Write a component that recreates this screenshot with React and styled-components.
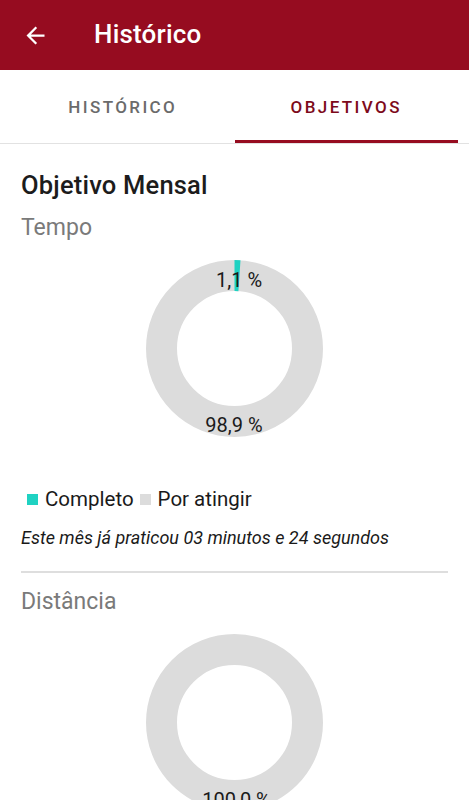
import React from 'react';
import styled, { createGlobalStyle } from 'styled-components';

const Global = createGlobalStyle`
  body {
    margin: 0;
    background: #fff;
    font-family: Roboto, "Noto Sans", sans-serif;
  }
`;

const Page = styled.div`
  width: 469px;
  height: 800px;
  overflow: hidden;
  background: #fff;
`;

const TopBar = styled.header`
  height: 70px;
  background: #960c20;
  display: flex;
  align-items: center;
  padding-left: 22px;
  gap: 45px;
  color: #fff;
`;

const Title = styled.h1`
  margin: 0 0 2px 0;
  font-size: 26px;
  font-weight: 500;
  letter-spacing: 0.2px;
`;

const Tabs = styled.nav`
  height: 73px;
  display: grid;
  grid-template-columns: 1fr 1fr;
  border-bottom: 1px solid #e2e2e2;
  padding: 0 11px 0 11px;
`;

const Tab = styled.div`
  display: flex;
  align-items: center;
  justify-content: center;
  font-size: 17px;
  font-weight: 500;
  letter-spacing: 2.4px;
  color: ${p => (p.active ? '#7d0a1b' : '#6b6b6b')};
  border-bottom: 3px solid ${p => (p.active ? '#960c20' : 'transparent')};
  padding-top: 3px;
`;

const Content = styled.section`
  padding: 26px 21px 0 21px;
`;

const Heading = styled.h2`
  margin: 0;
  font-size: 25.5px;
  font-weight: 500;
  letter-spacing: 0.2px;
  color: #1c1c1c;
  line-height: 30px;
`;

const SubHeading = styled.h3`
  margin: ${p => p.first ? '13px' : '14px'} 0 0 0;
  font-size: 23px;
  font-weight: 400;
  color: #7a7a7a;
  line-height: 30px;
`;

const ChartWrap = styled.div`
  position: relative;
  width: 177px;
  height: 177px;
  margin: 17px auto 0 auto;
`;

const ChartLabel = styled.span`
  position: absolute;
  transform: translate(-50%, -50%);
  font-size: 20px;
  color: #1a1a1a;
  white-space: nowrap;
`;

const Legend = styled.div`
  margin-top: 49px;
  display: flex;
  align-items: center;
  font-size: 20.5px;
  line-height: 26px;
  color: #1a1a1a;
`;

const Swatch = styled.span`
  width: 11px;
  height: 11px;
  background: ${p => p.color};
  margin: 0 7px 0 6px;
`;

const Note = styled.p`
  margin: 14px 0 0 0;
  font-size: 18px;
  line-height: 24px;
  font-style: italic;
  color: #1a1a1a;
`;

const Divider = styled.hr`
  border: none;
  height: 2px;
  background: #dedede;
  margin: 21px 0 0 0;
`;

const TEAL = '#1fd2c2';
const GREY = '#dcdcdc';

const Donut = ({ done }) => {
  const size = 177;
  const stroke = 31;
  const r = (size - stroke) / 2;
  const c = 2 * Math.PI * r;
  const cx = size / 2;
  const lr = 73;
  const segs = done > 0 ? [[0, done], [done, 100]] : [[0, 100]];
  const labels = segs.map(([a, b]) => {
    const mid = ((a + b) / 2 / 100) * 2 * Math.PI;
    const val = (b - a).toFixed(1).replace('.', ',') + ' %';
    return { x: cx + lr * Math.sin(mid) + 2, y: cx - lr * Math.cos(mid) + 4, val };
  });
  return (
    <ChartWrap>
      <svg width={size} height={size}>
        <circle cx={cx} cy={cx} r={r} fill="none" stroke={GREY} strokeWidth={stroke} />
        {done > 0 && (
          <circle
            cx={cx}
            cy={cx}
            r={r}
            fill="none"
            stroke={TEAL}
            strokeWidth={stroke}
            strokeDasharray={`${(done / 100) * c} ${c}`}
            transform={`rotate(-90 ${cx} ${cx})`}
          />
        )}
      </svg>
      {labels.map((l, i) => (
        <ChartLabel key={i} style={{ left: l.x, top: l.y }}>{l.val}</ChartLabel>
      ))}
    </ChartWrap>
  );
};

export default function App() {
  return (
    <Page>
      <Global />
      <TopBar>
        <svg width="27" height="27" viewBox="0 0 24 24">
          <path d="M20 11H7.83l5.59-5.59L12 4l-8 8 8 8 1.41-1.41L7.83 13H20v-2z" fill="#fff" />
        </svg>
        <Title>Histórico</Title>
      </TopBar>
      <Tabs>
        <Tab>HISTÓRICO</Tab>
        <Tab active>OBJETIVOS</Tab>
      </Tabs>
      <Content>
        <Heading>Objetivo Mensal</Heading>
        <SubHeading first>Tempo</SubHeading>
        <Donut done={1.1} />
        <Legend>
          <Swatch color={TEAL} />Completo
          <Swatch color={GREY} />Por atingir
        </Legend>
        <Note>Este mês já praticou 03 minutos e 24 segundos</Note>
        <Divider />
        <SubHeading>Distância</SubHeading>
        <Donut done={0} />
      </Content>
    </Page>
  );
}
